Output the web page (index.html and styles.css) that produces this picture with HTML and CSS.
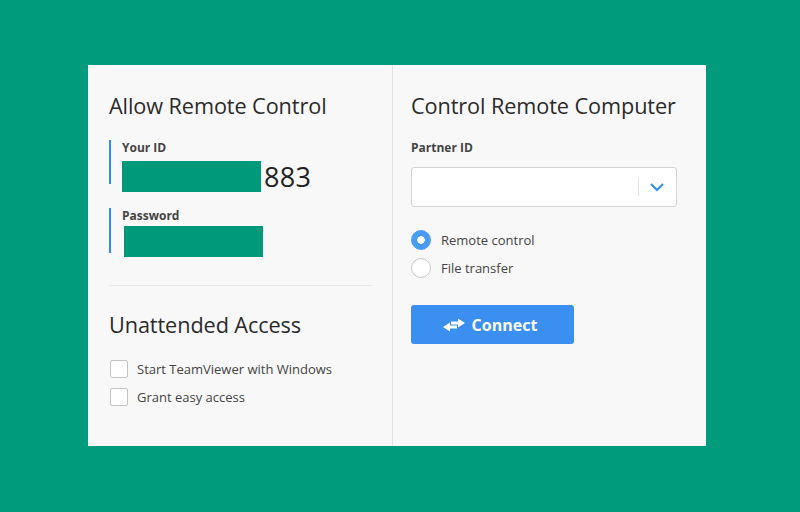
FILE: index.html
```html
<!DOCTYPE html>
<html lang="en">
<head>
    <meta charset="UTF-8">
    <title>TeamViewer</title>
    <link rel="stylesheet" href="styles.css">
</head>
<body>

    <div class="panel">
        <!-- Left side -->
        <div class="col col-left">
            <h2>Allow Remote Control</h2>

            <div class="field">
                <div class="label">Your ID</div>
                <div class="id-row">
                    <span class="mask"></span>
                    <span class="id-num">883</span>
                </div>
            </div>

            <div class="field field-pass">
                <div class="label">Password</div>
                <span class="mask mask-pass"></span>
            </div>

            <hr class="sep">

            <h2 class="title-unattended">Unattended Access</h2>
            <label class="check"><span class="box"></span>Start TeamViewer with Windows</label>
            <label class="check"><span class="box"></span>Grant easy access</label>
        </div>

        <!-- Right side -->
        <div class="col col-right">
            <h2>Control Remote Computer</h2>
            <div class="label">Partner ID</div>
            <div class="combo">
                <div class="combo-input"></div>
                <div class="combo-btn">
                    <svg width="16" height="10" viewBox="0 0 16 10">
                        <path d="M2 2 L8 8 L14 2" fill="none" stroke="#2f8ff0" stroke-width="2"/>
                    </svg>
                </div>
            </div>

            <div class="radios">
                <label class="radio"><span class="dot on"></span>Remote control</label>
                <label class="radio"><span class="dot"></span>File transfer</label>
            </div>

            <button class="connect">
                <svg width="24" height="14" viewBox="0 0 24 14">
                    <path d="M9 3.5 H16 V0.5 L23 5 L16 9.5 V6.5 H9 Z" fill="#fff"/>
                    <path d="M15 7.5 H8 V4.5 L1 9 L8 13.5 V10.5 H15 Z" fill="#fff"/>
                </svg>
                Connect
            </button>
        </div>
    </div>

</body>
</html>
```

FILE: styles.css
```css
/* General */
body, html {
    margin: 0;
    padding: 0;
}

body {
    background-color: #009a7c;
    font-family: "Open Sans", "Noto Sans", sans-serif;
    color: #333;
    height: 512px;
    padding: 65px 0 0 88px;
    box-sizing: border-box;
}

/* Main panel */
.panel {
    display: flex;
    width: 618px;
    height: 381px;
    background-color: #f8f8f8;
}

.col {
    box-sizing: border-box;
}

.col-left {
    width: 305px;
    padding: 26px 20px 0 21px;
    border-right: 1px solid #e2e2e2;
}

.col-right {
    flex: 1;
    padding: 26px 29px 0 18px;
}

h2 {
    margin: 0;
    font-size: 21.7px;
    font-weight: normal;
    line-height: 30px;
    color: #2b2b2b;
    letter-spacing: -0.1px;
}

.label {
    font-size: 12px;
    font-weight: bold;
    color: #444;
    line-height: 16px;
}

/* Your ID / Password */
.field {
    border-left: 2px solid #2f8ff0;
    padding-left: 11px;
    margin-top: 22px;
    height: 44px;
}

.field-pass {
    margin-top: 27px;
    height: 45px;
}

.field .label {
    margin-top: -3px;
}

.id-row {
    display: flex;
    align-items: flex-end;
    margin-top: 5px;
}

.mask {
    display: block;
    width: 139px;
    height: 31px;
    background-color: #009a7b;
}

.mask-pass {
    margin-left: 2px;
    margin-top: 2px;
}

.id-num {
    font-size: 27px;
    line-height: 30px;
    color: #222;
    margin-left: 3px;
    letter-spacing: 0.3px;
}

.sep {
    border: none;
    border-top: 1px solid #e6e8ea;
    margin: 32px 0 24px 0;
}

.title-unattended {
    margin-bottom: 15px;
}

/* Checkboxes */
.check {
    display: flex;
    align-items: center;
    font-size: 13px;
    color: #444;
    height: 28px;
}

.box {
    width: 16px;
    height: 16px;
    border: 1px solid #c4c4c4;
    border-radius: 2px;
    background: #fff;
    margin: 0 9px 0 1px;
}

/* Partner ID */
.col-right .label {
    margin-top: 19px;
}

.combo {
    display: flex;
    height: 38px;
    margin-top: 11px;
    background: #fff;
    border: 1px solid #d4d4d4;
    border-radius: 3px;
}

.combo-input {
    flex: 1;
}

.combo-btn {
    width: 38px;
    display: flex;
    align-items: center;
    justify-content: center;
    position: relative;
}

.combo-btn::before {
    content: "";
    position: absolute;
    left: 0;
    top: 10px;
    bottom: 10px;
    border-left: 1px solid #e6e6e6;
}

/* Radios */
.radios {
    margin-top: 19px;
}

.radio {
    display: flex;
    align-items: center;
    font-size: 13px;
    color: #444;
    height: 28px;
}

.dot {
    width: 18px;
    height: 18px;
    border: 1px solid #c8c8c8;
    border-radius: 50%;
    background: #fff;
    margin-right: 10px;
    box-sizing: content-box;
}

.dot.on {
    border-color: #4a9cf3;
    background: radial-gradient(circle, #fff 0 3.5px, #4a9cf3 4px);
}

/* Connect button */
.connect {
    display: flex;
    align-items: center;
    justify-content: center;
    gap: 6px;
    width: 163px;
    height: 39px;
    margin-top: 23px;
    background-color: #3a8ff0;
    color: #fff;
    border: none;
    border-radius: 3px;
    font-family: "Open Sans", "Noto Sans", sans-serif;
    font-size: 16px;
    font-weight: bold;
    padding: 0 6px 0 0;
}
```
